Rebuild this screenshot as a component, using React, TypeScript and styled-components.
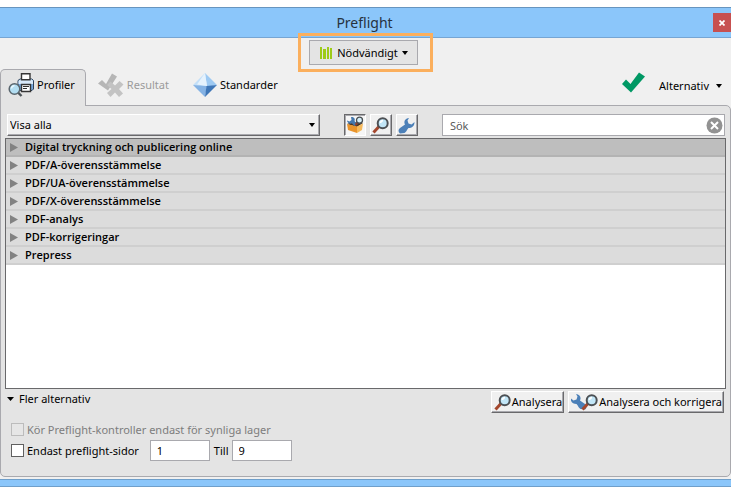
import React, { useState } from "react";
import styled, { createGlobalStyle, css } from "styled-components";

const GlobalStyle = createGlobalStyle`
  *, *::before, *::after { box-sizing: border-box; }
  body { margin: 0; background: #fff; }
  body, button, input, select {
    font-family: "Noto Sans", "Open Sans", sans-serif;
    font-size: 11px;
    line-height: 16px;
    color: #000;
  }
  button { padding: 0; border: 0; background: none; }
  svg { display: block; flex: none; }
`;

const Page = styled.div`
  display: flex;
  flex-direction: column;
  min-height: 100vh;
  padding: 7px 0;
`;

const Window = styled.main`
  flex: 1;
  display: flex;
  flex-direction: column;
  border-top: 1px solid #6795bf;
  background: #f0f0f0;
`;

const TitleBar = styled.header`
  display: grid;
  grid-template-columns: 1fr auto 1fr;
  align-items: center;
  height: 30px;
  background: #8bc6fa;
  border-bottom: 1px solid #76a5d3;
`;

const Title = styled.h1`
  grid-column: 2;
  margin: 0;
  padding-right: 2px;
  font-size: 14px;
  line-height: 20px;
  font-weight: 400;
  color: #26323f;
`;

const CloseButton = styled.button`
  justify-self: end;
  display: flex;
  align-items: center;
  justify-content: center;
  width: 18px;
  height: 19px;
  background: #c75050;
`;

const Body = styled.div`
  flex: 1;
  display: flex;
  flex-direction: column;
  padding-bottom: 2px;
`;

const LibraryRow = styled.div`
  display: flex;
  justify-content: center;
  padding: 2px 4px 4px 0;
`;

const LibraryButton = styled.button`
  position: relative;
  display: flex;
  align-items: center;
  gap: 4px;
  height: 25px;
  padding: 0 9px 0 10px;
  border: 1px solid #a9a9ae;
  background: #e4e4e4;

  &::after {
    content: "";
    position: absolute;
    inset: -8px -16px -8px -12px;
    border: 3px solid #fbaf5d;
    pointer-events: none;
  }
`;

const TabRow = styled.div`
  display: flex;
  align-items: flex-end;
  height: 37px;
  margin-bottom: -1px;
`;

const TabList = styled.div`
  display: flex;
  align-items: flex-end;
`;

const Tab = styled.button<{ $active?: boolean }>`
  display: flex;
  align-items: center;
  gap: 3px;
  height: 37px;
  padding: 0 11px 6px 11px;
  border: 1px solid transparent;
  border-bottom: 0;

  &:disabled { color: #9b9b9b; }

  ${(p) =>
    p.$active &&
    css`
      z-index: 1;
      padding-left: 7px;
      padding-right: 10px;
      border-color: #a9a9ae;
      border-radius: 5px 5px 0 0;
      background: #e4e4e4;
    `}
`;

const Spacer = styled.div`
  flex: 1;
`;

const Status = styled.div`
  display: flex;
  align-items: center;
  height: 37px;
  padding-bottom: 11px;
`;

const OptionsButton = styled.button`
  display: flex;
  align-items: center;
  gap: 7px;
  height: 37px;
  padding: 0 9px 4px 14px;
`;

const Panel = styled.section`
  flex: 1;
  display: flex;
  flex-direction: column;
  padding: 8px 4px 15px;
  border: 1px solid #a9a9ae;
  border-radius: 0 5px 5px 5px;
  background: #e4e4e4;
`;

const raised = css`
  border: 1px solid;
  border-color: #fff #69696b #69696b #fff;
  box-shadow: inset -1px -1px #a9a9ae;
  background: #f0f0f0;
`;

const FilterRow = styled.div`
  display: flex;
  align-items: center;
  gap: 24px;
  padding: 0 1px 0 2px;
`;

const SelectBox = styled.div`
  flex: 313 1 0;
  display: grid;
  align-items: center;
  height: 22px;
  ${raised}

  > * { grid-area: 1 / 1; }
  > svg { justify-self: end; margin-right: 4px; pointer-events: none; }
`;

const Select = styled.select`
  appearance: none;
  width: 100%;
  height: 20px;
  padding: 0 20px 0 2px;
  border: 0;
  background: transparent;
`;

const ToolGroup = styled.div`
  display: flex;
  gap: 4px;
`;

const ToolButton = styled.button<{ $pressed: boolean }>`
  display: flex;
  align-items: center;
  justify-content: center;
  width: 22px;
  height: 22px;
  ${raised}
  ${(p) =>
    p.$pressed &&
    css`
      border-color: #69696b #fff #fff #69696b;
      box-shadow: inset 1px 1px #a9a9ae;
      background: #f6f6f6;
    `}
`;

const SearchBox = styled.div`
  flex: 282 1 0;
  display: flex;
  align-items: center;
  height: 22px;
  padding-right: 1px;
  border: 1px solid #a9a9ae;
  background: #fff;
`;

const SearchInput = styled.input`
  flex: 1;
  min-width: 0;
  height: 20px;
  padding: 0 7px;
  border: 0;
  background: transparent;
  &::placeholder { color: #5a5a5a; opacity: 1; }
`;

const ProfileList = styled.ul`
  flex: 1;
  min-height: 128px;
  margin: 2px 0;
  padding: 0;
  list-style: none;
  border: 1px solid #69696b;
  background: #fff;
`;

const ProfileRow = styled.button<{ $selected: boolean }>`
  display: flex;
  align-items: center;
  gap: 7px;
  width: 100%;
  height: 18px;
  padding: 0 4px;
  font-family: "Open Sans", "Noto Sans", sans-serif;
  font-weight: 600;
  text-align: left;
  border-bottom: 2px solid ${(p) => (p.$selected ? "#b3b3b3" : "#cfcfcf")};
  background: ${(p) => (p.$selected ? "#bebebe" : "#dcdcdc")};
`;

const ActionRow = styled.div`
  display: flex;
  align-items: flex-start;
  gap: 4px;
  padding-right: 2px;
`;

const Disclosure = styled.button`
  display: flex;
  align-items: center;
  gap: 5px;
  padding-left: 2px;
`;

const ActionButton = styled.button`
  display: flex;
  align-items: center;
  gap: 1px;
  height: 22px;
  padding: 0 1px 0 2px;
  ${raised}
`;

const Options = styled.div`
  display: flex;
  flex-direction: column;
  padding: 6px 6px 0;
`;

const OptionRow = styled.div`
  display: flex;
  align-items: center;
  height: 21px;
`;

const CheckLabel = styled.label<{ $disabled?: boolean }>`
  display: flex;
  align-items: center;
  gap: 3px;
  color: ${(p) => (p.$disabled ? "#7d7d7d" : "#000")};
`;

const Checkbox = styled.input`
  appearance: none;
  width: 13px;
  height: 13px;
  margin: 0;
  border: 1px solid #606060;
  background: #fff;

  &:disabled { border-color: #bcbcbc; background: #e6e6e6; }
  &:checked { box-shadow: inset 0 0 0 2px #fff; background: #333; }
`;

const PageField = styled.input`
  width: 60px;
  height: 21px;
  padding: 0 6px;
  border: 1px solid #a9a9ae;
  background: #fff;
`;

const FromField = styled(PageField)`
  margin-left: 11px;
`;

const ToLabel = styled.label`
  display: flex;
  align-items: center;
  gap: 3px;
  margin-left: 4px;
`;

const BottomEdge = styled.footer`
  height: 8px;
  border: 1px solid #6f9fca;
  border-width: 1px 0;
  background: #8bc6fa;
`;

const Caret = ({ size = 6 }: { size?: number }) => (
  <svg width={size} height="4" viewBox="0 0 6 4" preserveAspectRatio="none" aria-hidden="true">
    <path d="M0 0h6L3 4z" fill="#000" />
  </svg>
);

const LibraryIcon = () => (
  <svg width="13" height="12" viewBox="0 0 13 12" aria-hidden="true">
    <path d="M0 0h2v12H0zM3 2h3v10H3zM7 0h2v12H7zM10 1h2v11h-2z" fill="#9dcb18" />
  </svg>
);

const PrinterIcon = () => (
  <svg width="26" height="24" viewBox="0 0 26 24" aria-hidden="true">
    <path d="M10 7.500L12 6h12l1.500 1.500V16L24 17.500H11.500L10 16z" fill="#76a9df" stroke="#2c4058" />
    <path d="M10.500 8L12 6.500h12L25 8v3H10.500z" fill="#d9eafa" />
    <path d="M13.500 0.700h8.500v6h-8.500z" fill="#fff" stroke="#353535" strokeWidth="1.400" />
    <path d="M13.500 11.500h9v7h-9z" fill="#fff" stroke="#353535" strokeWidth="1.400" />
    <path d="M15 13.500h6M15 15.500h4" stroke="#333" />
    <path d="M10 19.500l3.500 3.500" stroke="#4c5357" strokeWidth="2.400" />
    <circle cx="6.500" cy="16" r="5.300" fill="#b3def2" stroke="#5a666e" strokeWidth="1.500" />
    <path d="M3.500 15.500a3 3 0 0 1 3-2.800" fill="none" stroke="#e9f8ff" strokeWidth="1.500" />
  </svg>
);

const ResultIcon = () => (
  <svg width="26" height="24" viewBox="0 0 26 24" aria-hidden="true">
    <path d="M0 10.500L4 7l4 4L14 0.500l5 3-9 14z" fill="#b6b6b6" />
    <path d="M9 12l3.500-3.500L17 12.500l4.500-4.500 4 3.500-4.500 4.500 4 4.500-4 3.500-4-4.500-4.500 4.500L9 20l4.500-4z" fill="#c3c3c3" />
  </svg>
);

const StandardsIcon = () => (
  <svg width="24" height="24" viewBox="0 0 24 24" aria-hidden="true">
    <path d="M12 0L0 12l14 2z" fill="#c3dff8" />
    <path d="M12 0l12 12-10 2z" fill="#9dc9f2" />
    <path d="M0 12l14 1-2 11z" fill="#84b2e4" />
    <path d="M13.500 13l10.500-1-12 12z" fill="#3e76b7" />
    <path d="M12 0L4 11.500l10 1.500z" fill="#e5f2fd" />
  </svg>
);

const StatusCheck = () => (
  <svg width="23" height="21" viewBox="0 0 23 21" aria-label="OK" role="img">
    <path d="M0 12l4-4.500 4.500 4.500L17 0.500l6 4L9 20.500z" fill="#009864" />
  </svg>
);

const MagnifierShape = () => (
  <>
    <path d="M1.500 15.500l5.500-6" stroke="#a4472d" strokeWidth="3" />
    <circle cx="10.700" cy="6.200" r="5" fill="#c2e6f7" stroke="#4c5054" strokeWidth="2" />
    <path d="M8.500 6a2.400 2.400 0 0 1 2.500-2.300" fill="none" stroke="#fff" strokeWidth="1.800" />
  </>
);

const Magnifier = () => (
  <svg width="17" height="17" viewBox="0 0 17 17" aria-hidden="true">
    <MagnifierShape />
  </svg>
);

const wrenchPath =
  "M11 1C7 1.500 5.500 4.500 7 7.500L2 11C0 12.500 0 15 2 16.500L6.500 16C8.500 15 8.500 13 10.500 11C14 11 16.500 9 16.500 5L13.500 7.500L10.500 6.500L9.500 3.500z";

const Wrench = () => (
  <svg width="17" height="17" viewBox="0 0 17 17" aria-hidden="true">
    <path d={wrenchPath} fill="#4c80b8" />
  </svg>
);

const Toolbox = () => (
  <svg width="18" height="18" viewBox="0 0 18 18" aria-hidden="true">
    <path d="M1 8l5-2 11 1-6 4z" fill="#493522" />
    <path d="M1 4.500l2.500 1L5.500 4 5 1c3-.5 4.500 2 3.500 4l3 3.500L8.500 10 6 7.500C3.500 8 1 7 1 4.500z" fill="#4478ad" />
    <path d="M9.500 9l3-3.500" stroke="#91402d" strokeWidth="2" />
    <circle cx="13.500" cy="4.200" r="3" fill="#d5effa" stroke="#494e51" strokeWidth="1.300" />
    <path d="M1 8l10 2.500V17L2 14z" fill="#e9942b" />
    <path d="M11 10.500l6-3-1 6.500-5 3z" fill="#f5b95b" />
  </svg>
);

const FixIcon = () => (
  <svg width="27" height="17" viewBox="0 0 27 17" aria-hidden="true">
    <g transform="matrix(-1 0 0 1 16 -1)">
      <path d={wrenchPath} fill="#4c80b8" />
    </g>
    <g transform="translate(10 0)">
      <MagnifierShape />
    </g>
  </svg>
);

const ClearIcon = () => (
  <svg width="17" height="17" viewBox="0 0 17 17" aria-hidden="true">
    <circle cx="8.500" cy="8.500" r="8" fill="#929292" />
    <path d="M5 5l7 7M12 5l-7 7" stroke="#fff" strokeWidth="2" />
  </svg>
);

const CloseIcon = () => (
  <svg width="6" height="6" viewBox="0 0 6 6" aria-hidden="true">
    <path d="M0.500 0.500l5 5M5.500 0.500l-5 5" stroke="#fff" strokeWidth="1.700" />
  </svg>
);

const RowArrow = () => (
  <svg width="8" height="9" viewBox="0 0 8 9" aria-hidden="true">
    <path d="M0 0l8 4.500L0 9z" fill="#828282" />
  </svg>
);

const profiles = [
  "Digital tryckning och publicering online",
  "PDF/A-överensstämmelse",
  "PDF/UA-överensstämmelse",
  "PDF/X-överensstämmelse",
  "PDF-analys",
  "PDF-korrigeringar",
  "Prepress",
];

const tools = [
  { label: "Profiler", icon: <Toolbox /> },
  { label: "Kontroller", icon: <Magnifier /> },
  { label: "Korrigeringar", icon: <Wrench /> },
];

export default function App() {
  const [selected, setSelected] = useState(0);
  const [tool, setTool] = useState(0);
  const [search, setSearch] = useState("");

  return (
    <Page>
      <GlobalStyle />
      <Window>
        <TitleBar>
          <Title>Preflight</Title>
          <CloseButton aria-label="Stäng">
            <CloseIcon />
          </CloseButton>
        </TitleBar>
        <Body>
          <LibraryRow>
            <LibraryButton>
              <LibraryIcon />
              Nödvändigt
              <Caret />
            </LibraryButton>
          </LibraryRow>
          <TabRow>
            <TabList role="tablist">
              <Tab role="tab" aria-selected="true" $active>
                <PrinterIcon />
                Profiler
              </Tab>
              <Tab role="tab" aria-selected="false" disabled>
                <ResultIcon />
                Resultat
              </Tab>
              <Tab role="tab" aria-selected="false">
                <StandardsIcon />
                Standarder
              </Tab>
            </TabList>
            <Spacer />
            <Status>
              <StatusCheck />
            </Status>
            <OptionsButton>
              Alternativ
              <Caret />
            </OptionsButton>
          </TabRow>
          <Panel>
            <FilterRow>
              <SelectBox>
                <Select aria-label="Visa">
                  <option>Visa alla</option>
                </Select>
                <Caret />
              </SelectBox>
              <ToolGroup>
                {tools.map((item, i) => (
                  <ToolButton
                    key={item.label}
                    aria-label={item.label}
                    aria-pressed={tool === i}
                    $pressed={tool === i}
                    onClick={() => setTool(i)}
                  >
                    {item.icon}
                  </ToolButton>
                ))}
              </ToolGroup>
              <SearchBox>
                <SearchInput
                  aria-label="Sök"
                  placeholder="Sök"
                  value={search}
                  onChange={(e) => setSearch(e.target.value)}
                />
                <button aria-label="Rensa" onClick={() => setSearch("")}>
                  <ClearIcon />
                </button>
              </SearchBox>
            </FilterRow>
            <ProfileList>
              {profiles.map((name, i) => (
                <li key={name}>
                  <ProfileRow $selected={selected === i} onClick={() => setSelected(i)}>
                    <RowArrow />
                    {name}
                  </ProfileRow>
                </li>
              ))}
            </ProfileList>
            <ActionRow>
              <Disclosure aria-expanded="true">
                <Caret size={7} />
                Fler alternativ
              </Disclosure>
              <Spacer />
              <ActionButton>
                <Magnifier />
                Analysera
              </ActionButton>
              <ActionButton>
                <FixIcon />
                Analysera och korrigera
              </ActionButton>
            </ActionRow>
            <Options>
              <OptionRow>
                <CheckLabel $disabled>
                  <Checkbox type="checkbox" disabled />
                  Kör Preflight-kontroller endast för synliga lager
                </CheckLabel>
              </OptionRow>
              <OptionRow>
                <CheckLabel>
                  <Checkbox type="checkbox" />
                  Endast preflight-sidor
                </CheckLabel>
                <FromField aria-label="Från sida" defaultValue="1" />
                <ToLabel>
                  Till
                  <PageField defaultValue="9" />
                </ToLabel>
              </OptionRow>
            </Options>
          </Panel>
        </Body>
        <BottomEdge />
      </Window>
    </Page>
  );
}
